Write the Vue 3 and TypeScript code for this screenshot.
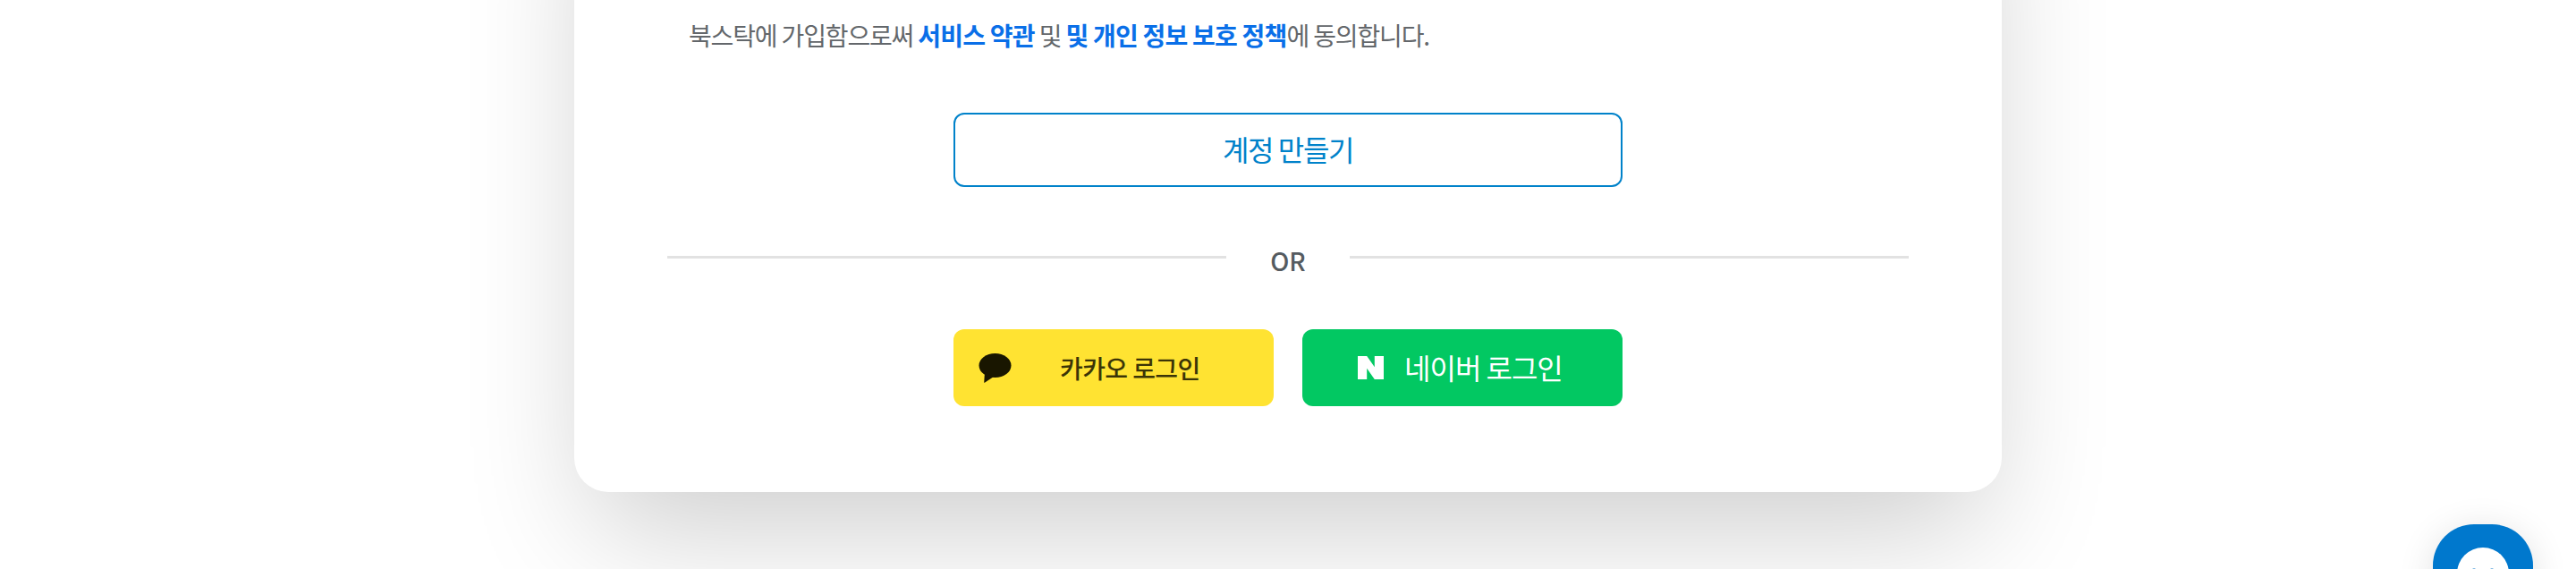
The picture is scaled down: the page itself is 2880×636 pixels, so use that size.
<script setup lang="ts">
const terms = '서비스 약관'
const privacy = '및 개인 정보 보호 정책'
</script>

<template>
  <div class="page">
    <section class="card">
      <p class="notice">
        북스탁에 가입함으로써 <a class="link">{{ terms }}</a> 및 <a class="link">{{ privacy }}</a>에 동의합니다.
      </p>
      <button class="signup" type="button">계정 만들기</button>
      <div class="divider">
        <span class="line"></span>
        <span class="or">OR</span>
        <span class="line"></span>
      </div>
      <div class="social">
        <button class="social-btn kakao" type="button">
          <svg class="kakao-icon" viewBox="0 0 37 33" aria-hidden="true">
            <ellipse cx="18.5" cy="13.5" rx="18" ry="13.5" fill="#191600"/>
            <path d="M7 21 L6.2 32.4 Q6.4 33 7.2 32.6 L17 26z" fill="#191600"/>
          </svg>
          <span class="kakao-label">카카오 로그인</span>
        </button>
        <button class="social-btn naver" type="button">
          <svg class="naver-icon" viewBox="0 0 29 26" aria-hidden="true">
            <path d="M0 0h10.2l8.6 12.3V0H29v26H18.8l-8.6-12.3V26H0z" fill="#fff"/>
          </svg>
          <span class="naver-label">네이버 로그인</span>
        </button>
      </div>
    </section>
    <div class="chat">
      <span class="chat-face">
        <i class="eye"></i>
        <i class="eye"></i>
      </span>
    </div>
  </div>
</template>

<style>
html,
body {
  margin: 0;
  background: #fff;
}
</style>

<style scoped>
.page {
  position: relative;
  height: 636px;
  overflow: hidden;
  font-family: "Noto Sans CJK KR", "Noto Sans", sans-serif;
}

.card {
  box-sizing: border-box;
  width: 1596px;
  height: 750px;
  margin: -200px auto 0;
  padding: 200px 104px 0;
  background: #fff;
  border-radius: 38px;
  box-shadow: 0 60px 140px -20px rgba(0, 0, 0, 0.2);
}

.notice {
  margin: 16px 0 0 24px;
  font-size: 28px;
  font-weight: 400;
  line-height: 46px;
  letter-spacing: -1.15px;
  color: #63676b;
  white-space: nowrap;
}

.link {
  font-weight: 700;
  letter-spacing: -0.8px;
  color: #0a6fe8;
}

.signup {
  display: block;
  box-sizing: border-box;
  width: 748px;
  height: 83px;
  margin: 64px auto 0;
  padding: 0 0 3px;
  background: #fff;
  border: 2px solid #0082ca;
  border-radius: 12px;
  font: inherit;
  font-size: 32px;
  font-weight: 400;
  letter-spacing: -1.4px;
  color: #0082ca;
}

.divider {
  display: flex;
  align-items: flex-start;
  height: 92px;
  margin-top: 67px;
}

.line {
  flex: 1;
  height: 3px;
  margin-top: 10px;
  background: #e2e2e2;
}

.or {
  width: 138px;
  text-align: center;
  font-size: 28px;
  font-weight: 500;
  line-height: 30px;
  color: #555b60;
}

.social {
  display: flex;
  justify-content: space-between;
  width: 748px;
  margin: 0 auto;
}

.social-btn {
  display: flex;
  align-items: center;
  box-sizing: border-box;
  width: 358px;
  height: 86px;
  padding: 0;
  border: 0;
  border-radius: 12px;
  font: inherit;
}

.kakao {
  background: #ffe332;
  padding-left: 28px;
}

.kakao-icon {
  width: 37px;
  height: 33px;
}

.kakao-label {
  margin-left: 54px;
  font-size: 28px;
  font-weight: 500;
  letter-spacing: -0.6px;
  color: #191600;
  opacity: 0.85;
}

.naver {
  background: #02c862;
  padding-left: 62px;
}

.naver-icon {
  width: 29px;
  height: 26px;
}

.naver-label {
  margin-left: 23px;
  padding-bottom: 3px;
  font-size: 32px;
  font-weight: 400;
  letter-spacing: -1px;
  color: #fff;
}

.chat {
  position: absolute;
  left: 2720px;
  top: 586px;
  display: flex;
  justify-content: center;
  box-sizing: border-box;
  width: 112px;
  height: 112px;
  padding-top: 26px;
  background: #0078cd;
  border-radius: 46px;
  box-shadow: 0 6px 40px rgba(0, 0, 0, 0.12);
}

.chat-face {
  display: flex;
  justify-content: center;
  gap: 16px;
  box-sizing: border-box;
  width: 58px;
  height: 58px;
  padding-top: 23px;
  background: #fff;
  border-radius: 50%;
}

.eye {
  width: 4px;
  height: 14px;
  background: #7fb8e4;
  border-radius: 2px;
}
</style>
